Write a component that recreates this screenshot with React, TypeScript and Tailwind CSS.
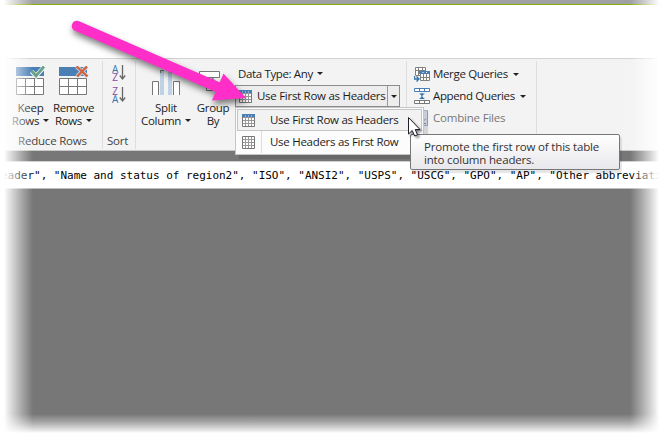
import React from "react";

const Caret = ({ className = "" }: { className?: string }) => (
  <svg width="6" height="3" viewBox="0 0 6 3" className={`shrink-0 ${className}`}>
    <path d="M0 0H6L3 3Z" fill="#222" />
  </svg>
);

const RowsIcon = ({ kind }: { kind: "keep" | "remove" }) => (
  <svg width="30" height="30" viewBox="0 0 30 30" className="block">
    <path d="M0 1H28V10H0Z" fill="#4a7fb5" />
    <path d="M.5 12.5H27.5V28.5H.5ZM9.5 12.5V28.5M18.5 12.5V28.5M.5 20.5H27.5" fill="#fff" stroke="#777" />
    {kind === "keep" ? (
      <>
        <path d="M15.5 5.5L20 10L28.5 .5" fill="none" stroke="#f3f3f3" strokeWidth="4.5" />
        <path d="M15.5 5L20 9.8L28 .5" fill="none" stroke="#68a18a" strokeWidth="2.8" />
      </>
    ) : (
      <>
        <path d="M17.5 .5L28.5 10.5M28 .5L18 10.5" fill="none" stroke="#cbd6e3" strokeWidth="4" />
        <path d="M17.5 .5L28.5 10.5M28 .5L18 10.5" fill="none" stroke="#d2613e" strokeWidth="2.3" />
      </>
    )}
  </svg>
);

const TableIcon = ({ header }: { header: boolean }) => (
  <svg width="13" height="13" viewBox="0 0 13 13" className="block shrink-0">
    <path d="M.5 .5H12.5V12.5H.5Z" fill="#fff" stroke="#777" />
    <path d="M3.5 1V12M6.5 1V12M9.5 1V12M1 3.5H12M1 6.5H12M1 9.5H12" stroke="#999" />
    {header && <path d="M0 0H13V3H0Z" fill="#4a7fb5" />}
    {header && <path d="M3.5 1V3M6.5 1V3M9.5 1V3" stroke="#8cadd0" />}
  </svg>
);

const SortIcon = ({ top, bottom }: { top: "A" | "Z"; bottom: "A" | "Z" }) => (
  <div className="flex h-[18px] w-[14px]">
    <div className="flex w-[7px] flex-col items-center text-[10px] leading-[8px] tracking-normal">
      <span className={top === "A" ? "text-[#3873ad]" : "text-[#8b4aa5]"}>{top}</span>
      <span className={bottom === "A" ? "text-[#3873ad]" : "text-[#8b4aa5]"}>{bottom}</span>
    </div>
    <svg width="7" height="16" viewBox="0 0 7 16" className="ml-px shrink-0">
      <path d="M3.5 0V14M.8 10.5L3.5 14L6.2 10.5" fill="none" stroke="#666" strokeWidth="1.3" />
    </svg>
  </div>
);

const SplitIcon = () => (
  <svg width="28" height="30" viewBox="0 0 28 30" className="block">
    <path d="M8 4H12V29H8ZM16 4H20V29H16Z" fill="#bfd2e6" />
    <path d="M8.5 7V4.5H11.5M16.5 4.5H19.5V7" fill="none" stroke="#777" />
    <path d="M.5 29V15.5H6.5V29M21.5 29V15.5H27.5V29" fill="#fff" stroke="#777" />
  </svg>
);

const GroupIcon = () => (
  <svg width="28" height="30" viewBox="0 0 28 30" className="block">
    <path d="M.5 5.5H20.5V11.5H.5ZM7.5 17.5H20.5V24.5H7.5Z" fill="#fff" stroke="#777" />
    <path d="M13.5 17V12M11 14.5L13.5 12L16 14.5" fill="none" stroke="#777" />
  </svg>
);

const MergeIcon = () => (
  <svg width="16" height="16" viewBox="0 0 16 16" className="block shrink-0">
    <path d="M1.5 1.5H11.5V9.5H1.5ZM4.5 1V9M8.5 1V9M1 4.5H11" fill="#fff" stroke="#808080" />
    <path d="M6 6H15.5V14.5H6Z" fill="#fff" />
    <path d="M6.5 8V14.5H15.5V8M9.5 8V14M12.5 8V14M6 11.5H15" fill="none" stroke="#808080" />
    <path d="M5 5H16V8H5Z" fill="#4a7fb5" />
    <path d="M8.5 6.5H9.5M12 6.5H13" stroke="#fff" />
    <path d="M.5 10V13H5M2.5 10.5L5 13L2.5 15.5" fill="none" stroke="#3873ad" strokeWidth="1.3" />
  </svg>
);

const AppendIcon = () => (
  <svg width="16" height="16" viewBox="0 0 16 16" className="block shrink-0">
    <path d="M.5 .5H15.5V3.5H.5ZM5.5 0V4M10.5 0V4" fill="#fff" stroke="#4a7fb5" />
    <path d="M.5 12.5H15.5V15.5H.5ZM5.5 12V16M10.5 12V16" fill="#fff" stroke="#777" />
    <path d="M5 5.5H11L8 7.8ZM5 11H11L8 8.5Z" fill="#3873ad" />
    <path d="M8 5V11" stroke="#3873ad" />
  </svg>
);

const CombineIcon = () => (
  <svg width="16" height="16" viewBox="0 0 16 16" className="block shrink-0">
    <path d="M4.5 .5H13.5V15.5H4.5Z" fill="#e3ebf4" stroke="#9eb3ca" />
    <path d="M9.5 3V11M7 8.5L9.5 11L12 8.5M7 13.5H12" fill="none" stroke="#8199b5" />
  </svg>
);

const BigButton = ({ icon, top, bottom, caret, className }: { icon: React.ReactNode; top: string; bottom: string; caret?: boolean; className: string }) => (
  <div className={`flex shrink-0 flex-col items-center ${className}`}>
    <div className="h-[35px]">{icon}</div>
    <div className="h-[13px] leading-[13px]">{top}</div>
    <div className="flex h-[13px] items-center leading-[13px]">
      {bottom}
      {caret && <Caret className="ml-1" />}
    </div>
  </div>
);

export default function App() {
  return (
    <div className="relative h-[436px] w-[663px] overflow-hidden whitespace-nowrap bg-[#777] font-['Open_Sans','Noto_Sans',sans-serif] text-[11.5px] tracking-[-0.28px] text-[#1c1c1c]">
      <div className="h-1 bg-[#a1a1a3]" />
      <div className="h-px bg-[#8cb010]" />
      <div className="h-[53px] bg-white" />
      <div className="flex h-[93px] border-b border-t border-b-[#c8c8c8] border-t-[#d2d2d2] bg-[#f3f3f3] pt-[2px]">
        <div className="flex h-[88px] w-[103px] flex-col border-r border-[#dedede]">
          <div className="flex h-[72px] pt-[5px]">
            <BigButton className="ml-2 w-[45px]" icon={<RowsIcon kind="keep" />} top="Keep" bottom="Rows" caret />
            <BigButton className="w-[41px] tracking-[-0.4px]" icon={<RowsIcon kind="remove" />} top="Remove" bottom="Rows" caret />
          </div>
          <div className="pl-[18px] leading-[15px] tracking-[-0.2px] text-[#444]">Reduce Rows</div>
        </div>
        <div className="flex h-[88px] w-[33px] flex-col border-r border-[#dedede]">
          <div className="flex h-[72px] flex-col gap-1 pl-[9px] pt-1">
            <SortIcon top="A" bottom="Z" />
            <SortIcon top="Z" bottom="A" />
          </div>
          <div className="pl-1 leading-[15px] tracking-[-0.2px] text-[#444]">Sort</div>
        </div>
        <div className="flex h-[88px] w-[271px] border-r border-[#dedede]">
          <BigButton className="w-[60px] pt-[5px]" icon={<SplitIcon />} top="Split" bottom="Column" caret />
          <BigButton className="w-[34px] pt-[5px]" icon={<GroupIcon />} top="Group" bottom="By" />
          <div className="ml-[5px] pt-1">
            <div className="flex h-[17px] items-center pl-[3px] tracking-[-0.36px]">
              Data Type: Any
              <Caret className="ml-1" />
            </div>
            <div className="mt-[3px] flex h-[22px] w-[165px] items-center border border-[#8c8c8c] bg-[#ededed] pl-[3px]">
              <TableIcon header />
              <span className="ml-[5px] w-[130px]">Use First Row as Headers</span>
              <div className="flex h-full flex-1 items-center justify-center border-l border-[#999]">
                <Caret />
              </div>
            </div>
          </div>
        </div>
        <div className="flex h-[88px] w-[130px] flex-col border-r border-[#dedede] pl-[7px] pt-[2px]">
          <div className="flex h-[22px] items-center"><MergeIcon /><span className="ml-[3px] tracking-[-0.34px]">Merge Queries</span><Caret className="ml-[5px]" /></div>
          <div className="flex h-[22px] items-center"><AppendIcon /><span className="ml-[3px] tracking-[-0.36px]">Append Queries</span><Caret className="ml-[5px]" /></div>
          <div className="flex h-[22px] items-center text-[#777]"><CombineIcon /><span className="ml-[3px] tracking-[-0.2px]">Combine Files</span></div>
        </div>
      </div>
      <div className="mt-[10px] h-[28px] border-b border-t border-b-[#bcbcbc] border-t-[#d0d0d0] bg-white pl-[1px] pt-px font-['DejaVu_Sans_Mono','Liberation_Mono',monospace] text-[11px] leading-[26px] tracking-[-0.016px] text-black">
        eader", "Name and status of region2", "ISO", "ANSI2", "USPS", "USCG", "GPO", "AP", "Other abbreviati
      </div>

      <div className="absolute left-[235px] top-[107px] h-[48px] w-[189px] border border-[#c5c5c5] bg-[#fcfcfc] p-px shadow-[4px_4px_1px_rgba(0,0,0,0.12)]">
        <div className="flex h-[22px] items-center border border-[#c6c6c6] bg-[#f2f2f2] pl-[4px]">
          <TableIcon header /><span className="ml-[15px]">Use First Row as Headers</span>
        </div>
        <div className="flex h-[22px] items-center pl-[5px]">
          <TableIcon header={false} /><div className="ml-[6px] h-full w-px bg-[#ddd]" /><span className="ml-[8px]">Use Headers as First Row</span>
        </div>
      </div>

      <div className="absolute left-[410px] top-[134px] h-[36px] w-[210px] rounded-[2px] border border-[#777] bg-linear-to-b from-white to-[#e8e8ec] pl-[13px] pt-[5px] leading-[13px] tracking-[-0.17px] text-[#333] shadow-[2px_3px_1px_rgba(0,0,0,0.1)]">
        <div>Promote the first row of this table</div>
        <div>into column headers.</div>
      </div>

      <svg width="663" height="436" viewBox="0 0 663 436" className="absolute inset-0">
        <g className="drop-shadow-[1px_4px_3px_rgba(0,0,0,0.5)]">
          <path d="M77 26L222 89" stroke="#ff2ec8" strokeWidth="10.5" strokeLinecap="round" />
          <path d="M223.5 73.5L246 98L212 100.5Z" fill="#ff2ec8" />
        </g>
        <path d="M408.5 117.5V134L412.2 130.5L414.7 136L417.5 134.8L415.2 129.5H420Z" fill="#fff" stroke="#20202c" className="drop-shadow-[2px_2px_1px_rgba(0,0,0,0.4)]" />
      </svg>

      <div className="absolute inset-y-0 left-0 w-[34px] bg-[linear-gradient(to_right,#fff_4px,rgba(255,255,255,0.88)_7px,rgba(255,255,255,0.35)_22px,transparent_33px)]" />
      <div className="absolute inset-y-0 right-0 w-[34px] bg-[linear-gradient(to_left,#fff_4px,rgba(255,255,255,0.88)_7px,rgba(255,255,255,0.35)_22px,transparent_33px)]" />
      <div className="absolute inset-x-0 bottom-0 h-[22px] bg-[linear-gradient(to_top,#fff_3px,rgba(255,255,255,0.85)_5px,rgba(255,255,255,0.35)_14px,transparent)]" />
    </div>
  );
}
